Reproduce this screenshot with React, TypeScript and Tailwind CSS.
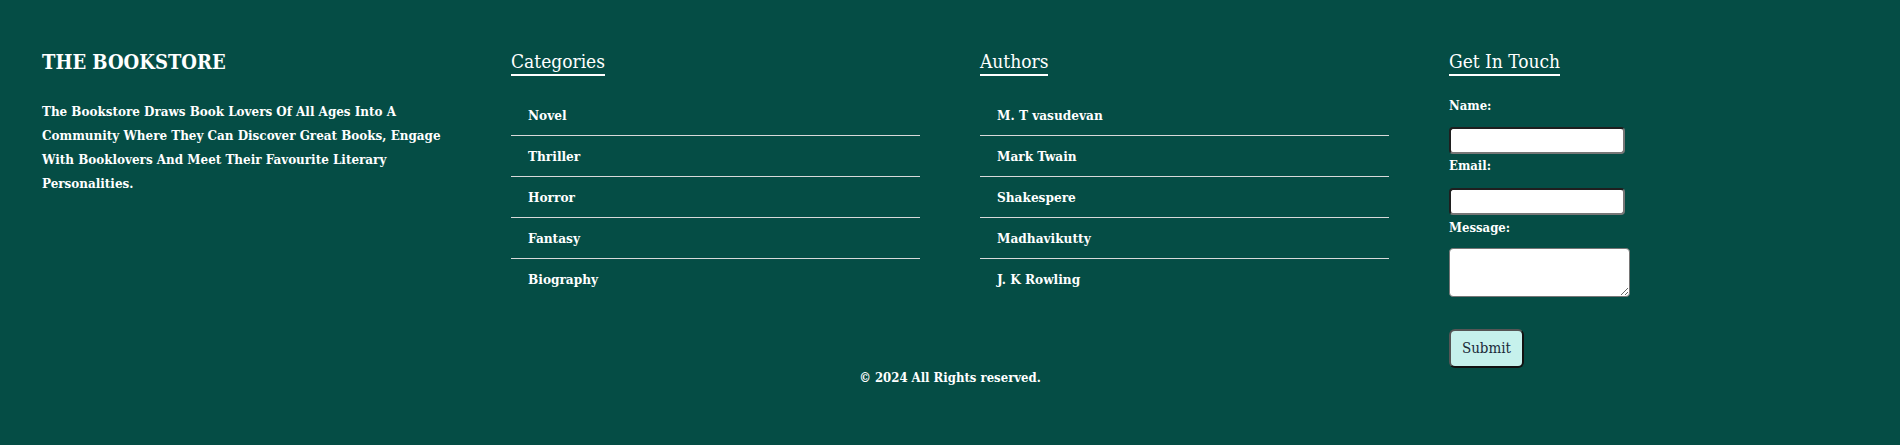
import React from "react";

const categories = ["Novel", "Thriller", "Horror", "Fantasy", "Biography"];
const authors = ["M. T vasudevan", "Mark Twain", "Shakespere", "Madhavikutty", "J. K Rowling"];

const Heading = ({ children }: { children: React.ReactNode }) => (
  <h3 className="inline-block border-b-2 border-white text-[19px] leading-[22px] pb-[2px] font-medium">
    {children}
  </h3>
);

const LinkList = ({ items }: { items: string[] }) => (
  <ul className="mt-[19px]">
    {items.map((item, i) => (
      <li
        key={item}
        className={`pl-[17px] h-[41px] flex items-center text-[13.5px] font-semibold ${
          i < items.length - 1 ? "border-b border-[#d9d9d9]" : ""
        }`}
      >
        {item}
      </li>
    ))}
  </ul>
);

const inputCls =
  "w-[176px] h-[27px] bg-white rounded-[4px] border-2 border-t-[#1f1f1f] border-l-[#1f1f1f] border-b-[#777] border-r-[#777]";

export default function App() {
  return (
    <footer className="w-full h-[445px] bg-[#054d45] text-white font-['DejaVu_Serif_Condensed','DejaVu_Serif',serif] [font-stretch:condensed]">
      <div className="grid grid-cols-4 gap-x-[60px] px-[42px] pt-[50px]">
        <div>
          <h2 className="text-[20px] leading-[24px] font-bold">THE BOOKSTORE</h2>
          <p className="mt-[26px] text-[13.3px] leading-[24px] font-semibold">
            The Bookstore Draws Book Lovers Of All Ages Into A Community Where They Can Discover
            Great Books, Engage With Booklovers And Meet Their Favourite Literary Personalities.
          </p>
        </div>
        <div>
          <Heading>Categories</Heading>
          <LinkList items={categories} />
        </div>
        <div>
          <Heading>Authors</Heading>
          <LinkList items={authors} />
        </div>
        <div>
          <Heading>Get In Touch</Heading>
          <form className="mt-[20px] flex flex-col items-start text-[13px] font-semibold">
            <label className="leading-[20px]">Name:</label>
            <input type="text" className={`mt-[11px] ${inputCls}`} />
            <label className="leading-[20px] mt-[2px]">Email:</label>
            <input type="email" className={`mt-[12px] ${inputCls}`} />
            <label className="leading-[20px] mt-[3px]">Message:</label>
            <textarea className="mt-[10px] w-[181px] h-[49px] bg-white rounded-[4px] border border-[#767676]" />
            <button
              type="button"
              className="mt-[32px] w-[75px] h-[39px] bg-[#c6f1ec] text-[#1b2a3a] font-normal text-[15px] rounded-[6px] border-2 border-t-[#555] border-l-[#555] border-b-[#111] border-r-[#111]"
            >
              Submit
            </button>
          </form>
        </div>
      </div>
      <p className="text-center text-[13px] leading-[20px] font-semibold">© 2024 All Rights reserved.</p>
    </footer>
  );
}
